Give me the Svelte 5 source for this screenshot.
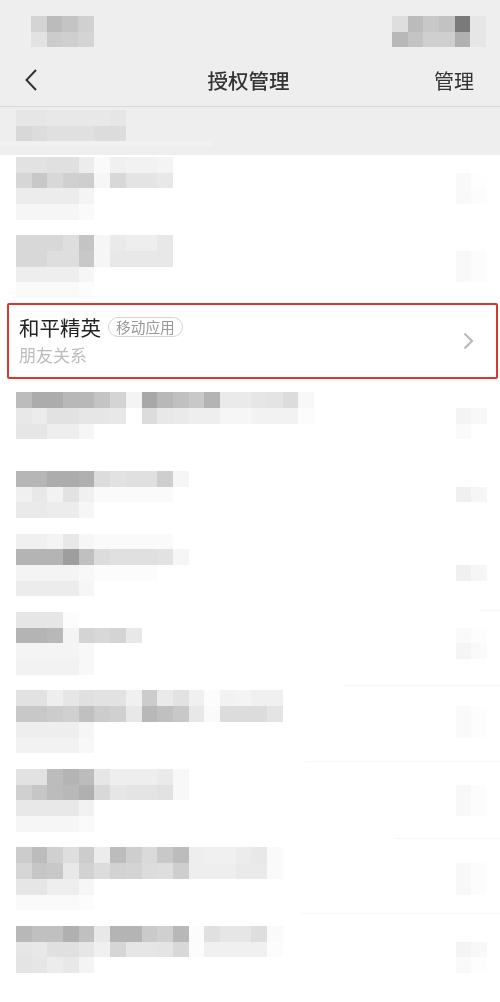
<script>
	const CELL = 15.7;

	// each mosaic row is a run of grey values, one per blurred cell
	const statusLeft = ['d4 bb c4 d0', 'e2 cc cf d4'];
	const statusRight = ['de bb c8 c2 7a e6', 'b8 c4 cf cf b0 e6'];
	const sectionRows = ['e6 e6 e8 e8 e8 e8 e6', 'd8 dc e0 e0 e0 dc dc'];

	const beforeSelected = [
		{
			h: 78.3,
			cells: ['e2 e2 e0 e0 ec fa f0 f2 f2 f4', 'd6 c8 d8 d0 ce f6 d8 e4 e4 e8', 'ec ec ec ec f4', 'f6 f6 f6 f6 fa'],
			side: ['f9 fe', 'f9 fc'],
			at: 1
		},
		{
			h: 67.7,
			cells: ['d8 d8 d8 de c4 f6 ea ee ee e8', 'd8 d8 de de c8 f6 e8 e8 e8 e8', 'ee ee ee ee f6', 'fa fa fa fa fc'],
			side: ['f9 fc', 'f9 fc'],
			at: 1
		}
	];

	const afterSelected = [
		{
			h: 78.6,
			cells: [
				'bc ac ac b8 b8 c4 d4 f4 a8 b8 c0 c8 b4 ea ea e6 e4 dc f8',
				'e8 ec e2 e2 e6 e6 e8 ff dc e8 ea ee ee f6 f6 f2 f2 f2 fc',
				'e6 e6 ee ee f6'
			],
			side: ['f4 f8', 'fa ff'],
			at: 1
		},
		{
			h: 62.6,
			cells: ['b6 b6 ac ac b0 dc e2 e0 e0 ce f6', 'f0 e8 f2 e2 f0 fa fa fa fa fa', 'ea ea ec ec f6'],
			side: ['f0 f6'],
			at: 1
		},
		{
			h: 78.4,
			cells: ['f0 f0 f4 e8 f6 fa fa fa fa fa', 'b4 b4 b4 9e c0 dc e0 e0 e0 e2 f6', 'f4 f4 f4 f4 f8 fc fc fc fc', 'ec ec ec ec f6'],
			side: ['f0 f6'],
			at: 2,
			rule: { y: 76, x: 480 }
		},
		{
			h: 78.5,
			cells: ['e6 e6 e6 fc', 'b4 b4 b8 f4 d4 d8 d4 e8', 'f4 f4 f4 f4 f8', 'f2 f2 f2 f2 f8'],
			side: ['fa fd', 'f5 fa'],
			at: 1,
			rule: { y: 73, x: 344 }
		},
		{
			h: 78.5,
			cells: [
				'e2 e2 ee e6 e0 e2 e2 f0 cc ea e2 f0 fc f2 f4 f0 f0',
				'c8 c8 cc d0 c0 cc d0 e8 b8 c0 c8 e8 fa dc dc dc e4',
				'ee ee ee ee f6',
				'f2 f2 f2 f2 f8'
			],
			side: ['fa fd', 'fa fd'],
			at: 1,
			rule: { y: 71, x: 305 }
		},
		{
			h: 78.5,
			cells: ['e2 e2 bc b4 bc e6 ee ee ee ea f8', 'd0 c6 bc b8 b0 d8 e6 e4 e4 e2 f8', 'e8 e8 e8 e8 f2', 'f6 f6 f6 f6 fa'],
			side: ['f8 fc', 'f8 fc'],
			at: 1,
			rule: { y: 69, x: 395 }
		},
		{
			h: 78.5,
			cells: [
				'cc bc d0 de cc ec bc ce da c8 bc ee f0 f0 ec e8 fa',
				'd6 c6 c8 e8 d2 dc d2 d4 dc de ce ee ee ee ea ea fa',
				'e6 e6 ee ee f6',
				'fa fa fa fa fc'
			],
			side: ['f8 fc', 'f8 fc'],
			at: 1,
			rule: { y: 66, x: 300 }
		},
		{
			h: 76,
			cells: ['b8 c0 c0 b0 c0 e8 b4 b4 ca d0 b8 fc e0 e6 e6 de fa', 'e6 e8 e0 e0 e6 f0 d6 e6 e6 e4 d8 fc f0 f0 f0 f0 fc', 'e4 e6 ec e8 f4'],
			side: ['f4 f8', 'fa fd'],
			at: 1
		}
	];

	const tone = (v) => `#${v}${v}${v}`;
	const split = (row) => row.split(' ');
</script>

{#snippet mosaic(rows)}
	<div class="mosaic">
		{#each rows as row}
			<div class="mosaic-row">
				{#each split(row) as v}
					<span class="cell" style="background: {tone(v)}"></span>
				{/each}
			</div>
		{/each}
	</div>
{/snippet}

{#snippet item(row)}
	<div class="item" style="height: {row.h}px">
		{@render mosaic(row.cells)}
		<div class="side" style="margin-top: {row.at * CELL}px">
			{@render mosaic(row.side)}
		</div>
		{#if row.rule}
			<i class="rule" style="top: {row.rule.y}px; left: {row.rule.x}px"></i>
		{/if}
	</div>
{/snippet}

<div class="page">
	<header class="top">
		<div class="status">
			{@render mosaic(statusLeft)}
			{@render mosaic(statusRight)}
		</div>
		<div class="nav">
			<svg class="back" width="14" height="24" viewBox="0 0 14 24">
				<path d="M12 2 L2.5 12 L12 22" fill="none" stroke="#333" stroke-width="2" />
			</svg>
			<span class="title">授权管理</span>
			<span class="action">管理</span>
		</div>
	</header>

	<section class="section">
		{@render mosaic(sectionRows)}
		<div class="section-fade"></div>
	</section>

	<div class="list">
		{#each beforeSelected as row}
			{@render item(row)}
		{/each}

		<div class="selected">
			<div class="selected-text">
				<div class="name-line">
					<span class="name">和平精英</span>
					<span class="tag">移动应用</span>
				</div>
				<div class="sub">朋友关系</div>
			</div>
			<svg class="chevron" width="11" height="18" viewBox="0 0 11 18">
				<path d="M1.5 1.5 L9 9 L1.5 16.5" fill="none" stroke="#b9b9b9" stroke-width="2.2" />
			</svg>
		</div>

		{#each afterSelected as row}
			{@render item(row)}
		{/each}
	</div>
</div>

<style>
	:global(body) {
		margin: 0;
		background: #fff;
	}
	.page {
		width: 500px;
		height: 1002px;
		overflow: hidden;
		font-family: 'Noto Sans CJK SC', 'Noto Sans', sans-serif;
	}
	.top {
		background: #eee;
		border-bottom: 1px solid #d9d9d9;
	}
	.status {
		display: flex;
		justify-content: space-between;
		height: 44px;
		padding: 16px 14px 0 31px;
		box-sizing: border-box;
	}
	.nav {
		display: flex;
		align-items: center;
		justify-content: space-between;
		height: 62px;
		padding: 10px 26px 0 24px;
		box-sizing: border-box;
		color: #333;
		filter: blur(0.35px);
	}
	.title {
		font-size: 20.5px;
		font-weight: 500;
		margin-left: 25px;
	}
	.action {
		font-size: 20px;
	}
	.section {
		height: 48px;
		padding: 3px 0 0 16px;
		box-sizing: border-box;
		background: #eee;
	}
	.section-fade {
		width: 213px;
		height: 5px;
		margin-left: -16px;
		background: #f1f1f1;
	}
	.list {
		padding-top: 2px;
	}
	.item {
		position: relative;
		display: flex;
		justify-content: space-between;
		align-items: flex-start;
		padding: 0 13px 0 16px;
		box-sizing: border-box;
	}
	.side {
		flex: none;
	}
	.rule {
		position: absolute;
		right: 0;
		height: 1px;
		background: #f7f7f7;
	}
	.mosaic {
		flex: none;
		filter: blur(0.4px);
	}
	.mosaic-row {
		display: flex;
		height: 15.7px;
	}
	.cell {
		width: 15.7px;
		height: 100%;
	}
	.selected {
		display: flex;
		align-items: center;
		justify-content: space-between;
		height: 76px;
		margin: 0 2px 13.4px 7px;
		padding: 0 22px 0 10px;
		box-sizing: border-box;
		border: 2px solid #d8392f;
		border-radius: 2px;
		background: #fff;
		filter: blur(0.3px);
	}
	.name-line {
		display: flex;
		align-items: center;
		gap: 7px;
		height: 26px;
	}
	.name {
		font-size: 20.5px;
		color: #222;
	}
	.tag {
		height: 20px;
		padding: 0 7px;
		line-height: 18px;
		box-sizing: border-box;
		border: 1px solid #d4d4d4;
		border-radius: 10px;
		font-size: 14.7px;
		color: #999;
	}
	.sub {
		margin-top: 3px;
		font-size: 17px;
		line-height: 24px;
		color: #bcbcbc;
	}
</style>
